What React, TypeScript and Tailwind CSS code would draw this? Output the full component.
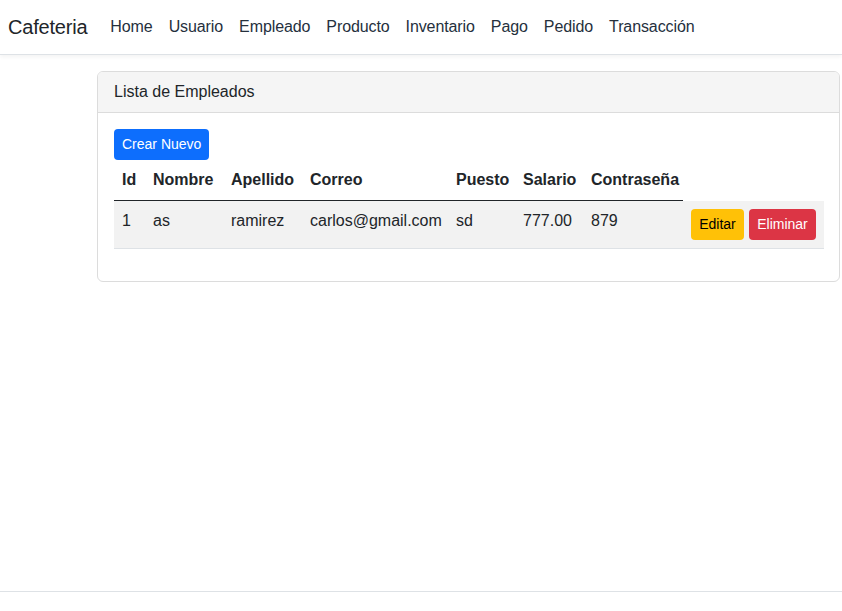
export default function App() {
  const links = ["Home", "Usuario", "Empleado", "Producto", "Inventario", "Pago", "Pedido", "Transacción"];
  const cols = [
    { label: "Id", w: "w-[31px]" },
    { label: "Nombre", w: "w-[78px]" },
    { label: "Apellido", w: "w-[79px]" },
    { label: "Correo", w: "w-[146px]" },
    { label: "Puesto", w: "w-[67px]" },
    { label: "Salario", w: "w-[68px]" },
    { label: "Contraseña", w: "w-[100px]" },
  ];
  const row = ["1", "as", "ramirez", "carlos@gmail.com", "sd", "777.00", "879"];

  return (
    <div className="min-h-screen flex flex-col bg-white text-[#212529] font-['Liberation_Sans',Arial,sans-serif]">
      {/* navbar */}
      <nav className="h-[55px] flex items-center px-2 border-b border-[#dee2e6] shadow-[0_2px_4px_rgba(0,0,0,0.05)]">
        <span className="text-[20px] leading-[30px] mr-[15px] text-[#212529] tracking-[-0.2px]">Cafeteria</span>
        <ul className="flex">
          {links.map((l) => (
            <li key={l} className="px-2 text-[16px] leading-6 text-[#25303d] tracking-[-0.1px]">
              {l}
            </li>
          ))}
        </ul>
      </nav>

      {/* content */}
      <main className="pl-[97px] pr-[2px] pt-4">
        <div className="border border-[#dcdcdc] rounded-[6px] overflow-hidden">
          <div className="bg-[#f5f5f5] border-b border-[#dcdcdc] px-4 py-2 text-[16px] leading-6">
            Lista de Empleados
          </div>
          <div className="p-4">
            <div className="flex">
              <button className="bg-[#0d6efd] text-white text-[14px] leading-[21px] px-2 py-1 rounded-[4px] h-[31px] whitespace-nowrap">
                Crear Nuevo
              </button>
            </div>
            <table className="w-[710px] table-fixed border-collapse text-[16px] leading-6 mb-4">
              <thead>
                <tr>
                  {cols.map((c) => (
                    <th key={c.label} className={`${c.w} text-left font-bold p-2 border-b border-[#212529] whitespace-nowrap`}>
                      {c.label}
                    </th>
                  ))}
                  <th className="w-[141px] p-0"></th>
                </tr>
              </thead>
              <tbody>
                <tr className="bg-[#f2f2f2] border-b border-[#dee2e6]">
                  {row.map((v, i) => (
                    <td key={i} className="p-2 align-top whitespace-nowrap">
                      {v}
                    </td>
                  ))}
                  <td className="p-2 align-top">
                    <div className="flex gap-[5px]">
                      <button className="bg-[#ffc107] text-black text-[14px] leading-[21px] px-2 py-1 rounded-[4px] h-[31px] w-[53px] whitespace-nowrap">
                        Editar
                      </button>
                      <button className="bg-[#dc3545] text-white text-[14px] leading-[21px] px-2 py-1 rounded-[4px] h-[31px] w-[67px] whitespace-nowrap">
                        Eliminar
                      </button>
                    </div>
                  </td>
                </tr>
              </tbody>
            </table>
          </div>
        </div>
      </main>

      {/* footer */}
      <footer className="mt-auto h-[20px] border-t border-[#dee2e6]" />
    </div>
  );
}
